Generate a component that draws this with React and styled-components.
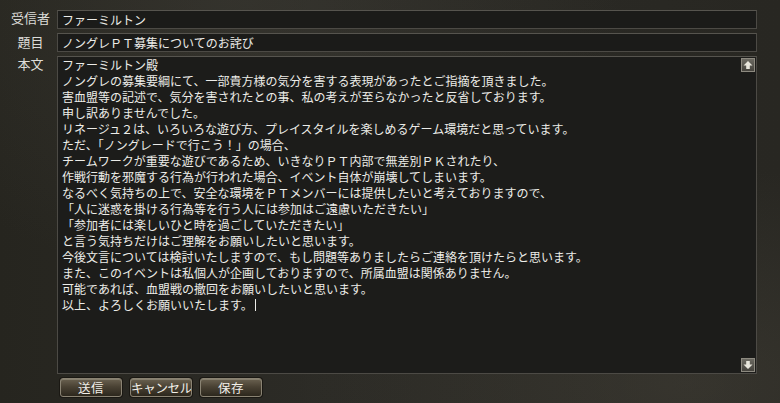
import styled, { createGlobalStyle } from 'styled-components';

const GlobalStyle = createGlobalStyle`
    html, body {
        margin: 0;
        padding: 0;
        background: #24231f;
    }
`;

const Window = styled.div`
    width: 780px;
    height: 403px;
    box-sizing: border-box;
    padding: 10px 0 0 0;
    overflow: hidden;
    font-family: "Noto Sans CJK JP", "Noto Sans", sans-serif;
    color: #e6e6e2;
    background:
        radial-gradient(ellipse at 88% 95%, rgba(80, 76, 66, 0.35), transparent 40%),
        radial-gradient(ellipse at 30% 0%, rgba(70, 68, 60, 0.35), transparent 50%),
        linear-gradient(90deg, #26251f 0%, #2c2b26 40%, #282722 100%);

    display: grid;
    grid-template-columns: 57px 700px;
    grid-template-rows: 19px 19px 318px 20px;
    row-gap: 4px;
`;

const Label = styled.div`
    font-size: 13px;
    line-height: 1;
    text-align: center;
    padding-top: ${({ $top }) => $top || 0}px;
    padding-left: 4px;
    color: #dcdcd8;
    white-space: nowrap;
`;

const Field = styled.div`
    box-sizing: border-box;
    height: 100%;
    background: #1b1b19;
    border: 1px solid #4c4a45;
    border-top-color: #56544e;
    padding: 1px 4px 0;
    font-size: 12px;
    line-height: 16px;
    color: #ecece8;
    white-space: pre;
`;

const Body = styled(Field)`
    position: relative;
    padding: 0 4px;
    background: #1c1c1a;
`;

const Line = styled.div`
    height: 16px;
    white-space: pre;
`;

const Caret = styled.span`
    display: inline-block;
    width: 1px;
    height: 12px;
    margin-left: 2px;
    background: #ecece8;
    vertical-align: -1px;
`;

const ScrollBtn = styled.div`
    position: absolute;
    right: 1px;
    ${({ $down }) => ($down ? 'bottom: 1px;' : 'top: 1px;')}
    width: 14px;
    height: 14px;
    box-sizing: border-box;
    border: 1px solid #8d8a80;
    background: linear-gradient(180deg, #6c6a62 0%, #45433d 100%);
    display: grid;
    place-items: center;
`;

const Buttons = styled.div`
    grid-column: 2;
    display: flex;
    gap: 8px;
    padding-left: 3px;
`;

const Button = styled.button`
    width: 62px;
    height: 19px;
    box-sizing: border-box;
    padding: 0;
    border: 1px solid #8a8373;
    border-radius: 3px;
    background: linear-gradient(180deg, #6a6150 0%, #4a4234 45%, #2c271d 100%);
    box-shadow: inset 0 1px 0 rgba(255, 255, 240, 0.2), 0 0 0 1px #1a1813;
    color: #f2f0ea;
    font-family: "Noto Sans CJK JP", "Noto Sans", sans-serif;
    font-size: 12.5px;
    line-height: 17px;
    white-space: nowrap;
    overflow: hidden;
    letter-spacing: ${({ $tight }) => ($tight ? '-0.3px' : '0.5px')};
`;

const lines = [
    'ファーミルトン殿',
    'ノングレの募集要綱にて、一部貴方様の気分を害する表現があったとご指摘を頂きました。',
    '害血盟等の記述で、気分を害されたとの事、私の考えが至らなかったと反省しております。',
    '申し訳ありませんでした。',
    'リネージュ２は、いろいろな遊び方、プレイスタイルを楽しめるゲーム環境だと思っています。',
    'ただ、「ノングレードで行こう！」の場合、',
    'チームワークが重要な遊びであるため、いきなりＰＴ内部で無差別ＰＫされたり、',
    '作戦行動を邪魔する行為が行われた場合、イベント自体が崩壊してしまいます。',
    'なるべく気持ちの上で、安全な環境をＰＴメンバーには提供したいと考えておりますので、',
    '「人に迷惑を掛ける行為等を行う人には参加はご遠慮いただきたい」',
    '「参加者には楽しいひと時を過ごしていただきたい」',
    'と言う気持ちだけはご理解をお願いしたいと思います。',
    '今後文言については検討いたしますので、もし問題等ありましたらご連絡を頂けたらと思います。',
    'また、このイベントは私個人が企画しておりますので、所属血盟は関係ありません。',
    '可能であれば、血盟戦の撤回をお願いしたいと思います。',
];

const Arrow = ({ down }) => (
    <svg width="10" height="10" viewBox="0 0 10 10" style={down ? { transform: 'rotate(180deg)' } : undefined}>
        <path d="M5 1 L9.5 5.5 H6.8 V9 H3.2 V5.5 H0.5 Z" fill="#e8e6dc" />
    </svg>
);

const App = () => {
    return (
        <>
            <GlobalStyle />
            <Window>
                <Label $top={1}>受信者</Label>
                <Field>ファーミルトン</Field>

                <Label $top={2}>題目</Label>
                <Field>ノングレＰＴ募集についてのお詫び</Field>

                <Label $top={1}>本文</Label>
                <Body>
                    {lines.map((text, i) => (
                        <Line key={i}>{text}</Line>
                    ))}
                    <Line>
                        以上、よろしくお願いいたします。
                        <Caret />
                    </Line>
                    <ScrollBtn>
                        <Arrow />
                    </ScrollBtn>
                    <ScrollBtn $down>
                        <Arrow down />
                    </ScrollBtn>
                </Body>

                <Buttons>
                    <Button>送信</Button>
                    <Button $tight>キャンセル</Button>
                    <Button>保存</Button>
                </Buttons>
            </Window>
        </>
    );
};

export default App;
